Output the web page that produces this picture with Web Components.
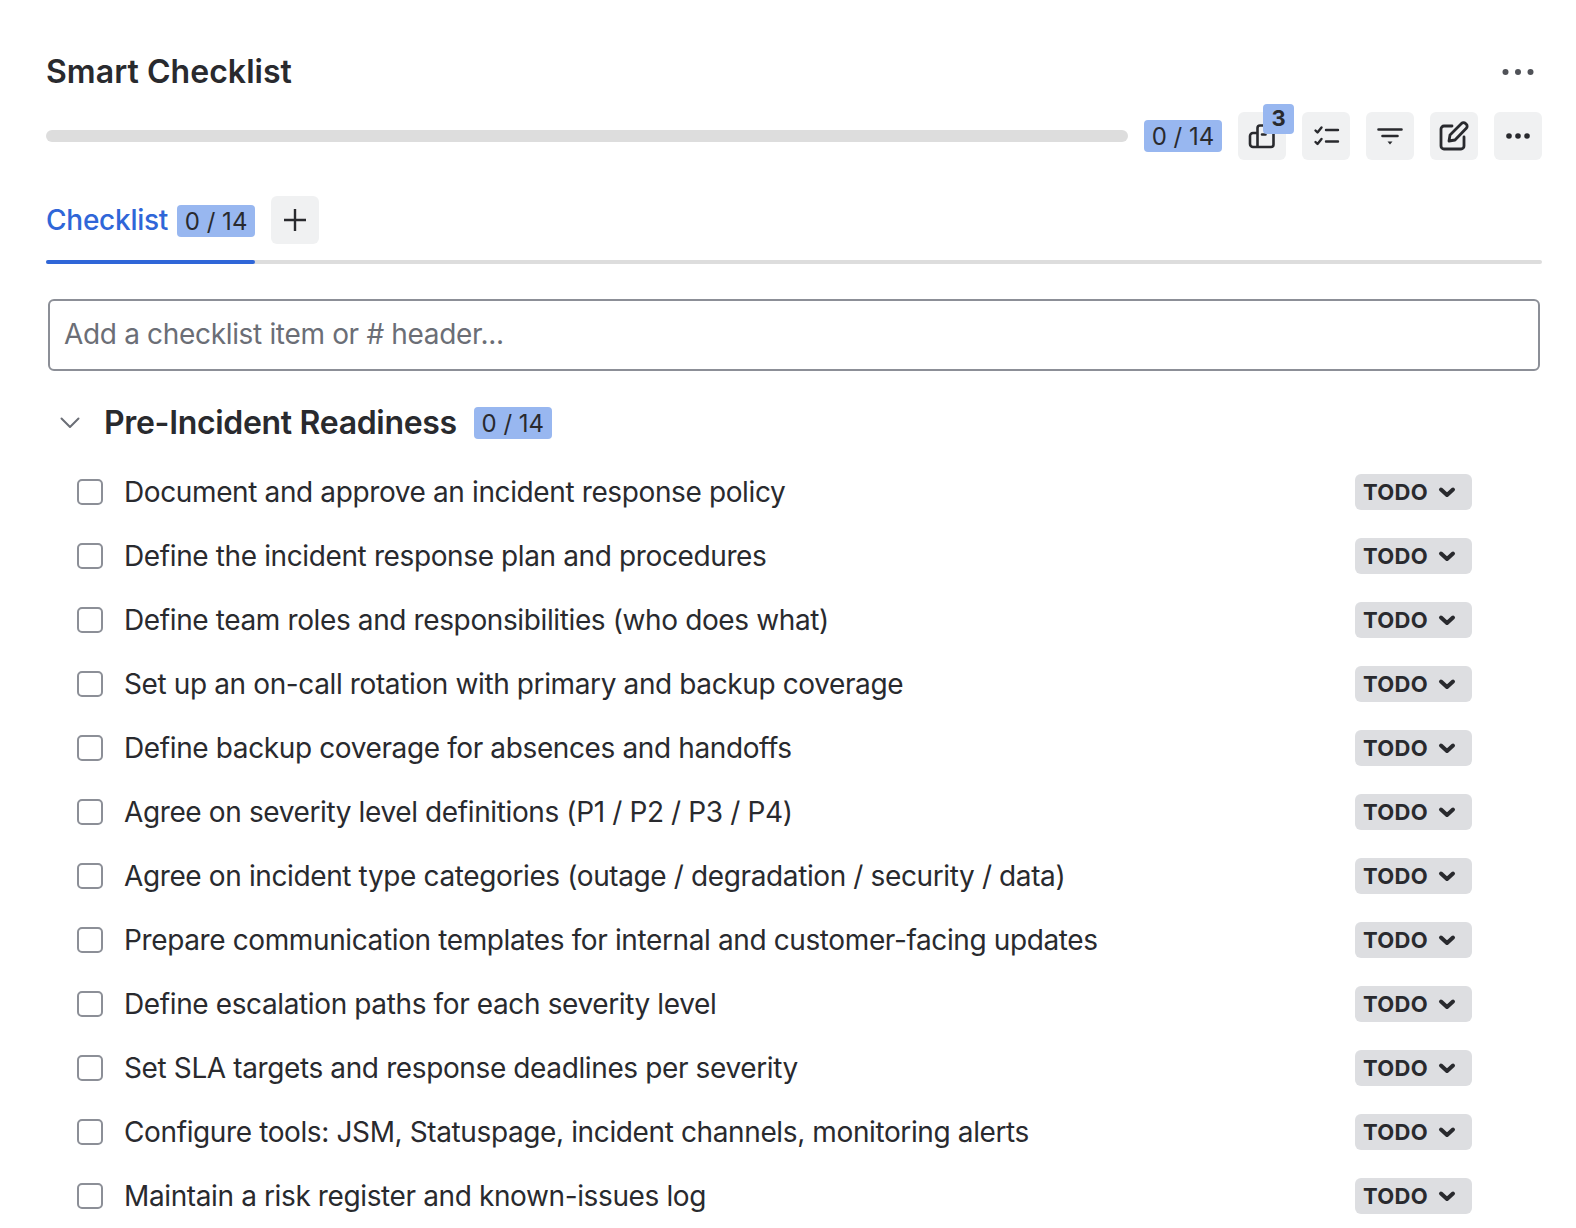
<!DOCTYPE html>
<html>
<head>
<meta charset="utf-8">
<title>Smart Checklist</title>
<style>
  html, body { margin: 0; background: #fff; height: 100%; overflow: hidden; }
  body { font-family: Inter, "Liberation Sans", sans-serif; color: #292a2e; }
</style>
</head>
<body>
<smart-checklist></smart-checklist>

<script>
// small blue "0 / 14" counter
class CountBadge extends HTMLElement {
  constructor() {
    super();
    this.attachShadow({ mode: "open" });
    this.shadowRoot.innerHTML = `
      <style>
        :host {
          display: inline-flex; align-items: center; justify-content: center;
          box-sizing: border-box; padding-top: 2px;
          height: 32px; width: 78px; border-radius: 4px;
          background: #98b7f0; color: #292a2e;
          font-size: 24px; font-weight: 400; line-height: 30px; letter-spacing: 0;
        }
      </style>
      <slot></slot>`;
  }
}
customElements.define("count-badge", CountBadge);

// square grey toolbar button
class IconButton extends HTMLElement {
  constructor() {
    super();
    this.attachShadow({ mode: "open" });
    this.shadowRoot.innerHTML = `
      <style>
        :host {
          display: flex; align-items: center; justify-content: center;
          position: relative; flex: none;
          width: 48px; height: 48px; border-radius: 6px;
          background: #f0f1f2; color: #292a2e;
        }
        ::slotted(svg) { display: block; }
        .count {
          position: absolute; left: 25px; top: -8px;
          width: 31px; height: 30px; border-radius: 4px;
          background: #98b7f0; color: #292a2e;
          font-size: 22px; font-weight: 700; line-height: 28px; text-align: center;
        }
        .count:empty { display: none; }
      </style>
      <slot></slot>
      <span class="count">${this.getAttribute("count") || ""}</span>`;
  }
}
customElements.define("icon-button", IconButton);

// one row of the list
class ChecklistItem extends HTMLElement {
  constructor() {
    super();
    this.attachShadow({ mode: "open" });
    this.shadowRoot.innerHTML = `
      <style>
        :host {
          display: flex; align-items: center;
          height: 64px; padding-left: 31px; padding-right: 70px;
        }
        .box {
          flex: none; width: 26px; height: 26px; box-sizing: border-box;
          border: 2px solid #8c8f97; border-radius: 5px; background: #fff;
        }
        .text {
          flex: 1; margin-left: 21px;
          font-size: 28px; line-height: 40px; color: #292a2e; white-space: nowrap;
          letter-spacing: -0.38px;
        }
        .status {
          flex: none; display: flex; align-items: center; box-sizing: border-box;
          width: 117px; height: 36px; padding-left: 8px; border-radius: 6px;
          background: #dddee1; color: #292a2e;
          font-size: 22px; font-weight: 700; letter-spacing: 0.3px;
        }
        svg { margin-left: 10px; display: block; }
      </style>
      <span class="box"></span>
      <span class="text"><slot></slot></span>
      <span class="status">TODO
        <svg width="18" height="12" viewBox="0 0 18 12" fill="none" stroke="#292a2e" stroke-width="4" stroke-linecap="round" stroke-linejoin="round"><path d="M3 3.500l6 5.500 6-5.500"/></svg>
      </span>`;
  }
}
customElements.define("checklist-item", ChecklistItem);

const ITEMS = [
  "Document and approve an incident response policy",
  "Define the incident response plan and procedures",
  "Define team roles and responsibilities (who does what)",
  "Set up an on-call rotation with primary and backup coverage",
  "Define backup coverage for absences and handoffs",
  "Agree on severity level definitions (P1 / P2 / P3 / P4)",
  "Agree on incident type categories (outage / degradation / security / data)",
  "Prepare communication templates for internal and customer-facing updates",
  "Define escalation paths for each severity level",
  "Set SLA targets and response deadlines per severity",
  "Configure tools: JSM, Statuspage, incident channels, monitoring alerts",
  "Maintain a risk register and known-issues log"
];

class SmartChecklist extends HTMLElement {
  constructor() {
    super();
    this.attachShadow({ mode: "open" });
    this.shadowRoot.innerHTML = `
      <style>
        :host { display: block; padding: 48px 34px 0 46px; height: 1228px; box-sizing: border-box; overflow: hidden; }
        .title-row { display: flex; align-items: center; justify-content: space-between; height: 48px; }
        h1 { margin: 0; font-size: 32px; font-weight: 600; line-height: 48px; color: #292a2e; letter-spacing: 0.05px; }
        .tools { display: flex; align-items: center; margin-top: 16px; }
        .bar { flex: 1; height: 12px; border-radius: 6px; background: #dddddd; margin-right: 16px; }
        .tools icon-button { margin-left: 16px; }
        .tabs { display: flex; align-items: center; height: 48px; margin-top: 36px; }
        .tabs count-badge { margin-top: 2px; }
        .tab { font-size: 28px; font-weight: 500; color: #2f66d8; margin-right: 9px; letter-spacing: -0.25px; }
        .tabs icon-button { margin-left: 16px; }
        .rule { position: relative; height: 4px; margin-top: 16px; background: #dddddd; border-radius: 2px; }
        .rule i { display: block; width: 209px; height: 4px; border-radius: 2px; background: #2f66d8; }
        input {
          display: block; box-sizing: border-box; width: 1492px; height: 72px; margin: 35px 0 0 2px;
          padding: 0 14px 2px; border: 2px solid #8c8f97; border-radius: 6px; outline: none;
          font: 28px Inter, sans-serif; color: #292a2e; letter-spacing: -0.33px;
        }
        input::placeholder { color: #6b6e76; opacity: 1; }
        .group { display: flex; align-items: center; height: 48px; margin-top: 28px; padding-left: 14px; }
        .group svg { display: block; flex: none; }
        h2 { margin: 0 17px 0 24px; font-size: 32px; font-weight: 600; line-height: 48px; color: #292a2e; letter-spacing: -0.32px; }
        .list { margin-top: 13px; }
      </style>

      <div class="title-row">
        <h1>Smart Checklist</h1>
        <svg width="32" height="8" viewBox="0 0 32 8" fill="#505258" style="margin-right:8px"><circle cx="3.500" cy="4" r="3"/><circle cx="16" cy="4" r="3"/><circle cx="28.500" cy="4" r="3"/></svg>
      </div>

      <div class="tools">
        <div class="bar"></div>
        <count-badge>0 / 14</count-badge>
        <icon-button count="3">
          <svg width="28" height="28" viewBox="0 0 28 28" fill="none" stroke="#292a2e" stroke-width="2.600" stroke-linecap="round" stroke-linejoin="round"><path d="M9.500 11H5a3 3 0 0 0-3 3v8a3 3 0 0 0 3 3h18a2.500 2.500 0 0 0 2.500-2.500V11M9.500 25V6a2.500 2.500 0 0 1 2.500-2.500h5M14 12.500h3.500"/></svg>
        </icon-button>
        <icon-button>
          <svg width="28" height="28" viewBox="0 0 28 28" fill="none" stroke="#292a2e" stroke-width="2.400" stroke-linecap="round" stroke-linejoin="round"><path d="M3.500 8.500l2 2L9.500 5.500M3.500 20l2 2 4-5M14 8h12M14 19.500h12"/></svg>
        </icon-button>
        <icon-button>
          <svg width="28" height="28" viewBox="0 0 28 28" fill="none"><path d="M2.500 7.500h23M6.500 14h15" stroke="#292a2e" stroke-width="2.600" stroke-linecap="round"/><path d="M11.500 19.500h5l-2.500 3z" fill="#292a2e"/></svg>
        </icon-button>
        <icon-button>
          <svg width="30" height="30" viewBox="0 0 30 30" fill="none" stroke="#292a2e" stroke-width="2.800" stroke-linecap="round" stroke-linejoin="round"><path d="M13 5H5a3 3 0 0 0-3 3v17a3 3 0 0 0 3 3h17a3 3 0 0 0 3-3v-9"/><path d="M10 20l1-6L22.500 2.500a2.800 2.800 0 0 1 4 0l.8.8a2.800 2.800 0 0 1 0 4L16 19z"/></svg>
        </icon-button>
        <icon-button>
          <svg width="24" height="6" viewBox="0 0 24 6" fill="#292a2e"><circle cx="3" cy="3" r="2.800"/><circle cx="12" cy="3" r="2.800"/><circle cx="21" cy="3" r="2.800"/></svg>
        </icon-button>
      </div>

      <div class="tabs">
        <span class="tab">Checklist</span>
        <count-badge>0 / 14</count-badge>
        <icon-button>
          <svg width="24" height="24" viewBox="0 0 24 24" fill="none" stroke="#292a2e" stroke-width="2.400"><path d="M12 1v22M1 12h22"/></svg>
        </icon-button>
      </div>
      <div class="rule"><i></i></div>

      <input placeholder="Add a checklist item or # header...">

      <div class="group">
        <svg width="20" height="12" viewBox="0 0 20 12" fill="none" stroke="#6b6e76" stroke-width="2" stroke-linecap="round" stroke-linejoin="round"><path d="M1.500 1.500L10 10l8.500-8.500"/></svg>
        <h2>Pre-Incident Readiness</h2>
        <count-badge>0 / 14</count-badge>
      </div>

      <div class="list"></div>`;

    const list = this.shadowRoot.querySelector(".list");
    for (const text of ITEMS) {
      const row = document.createElement("checklist-item");
      row.textContent = text;
      list.appendChild(row);
    }
  }
}
customElements.define("smart-checklist", SmartChecklist);
</script>
</body>
</html>
